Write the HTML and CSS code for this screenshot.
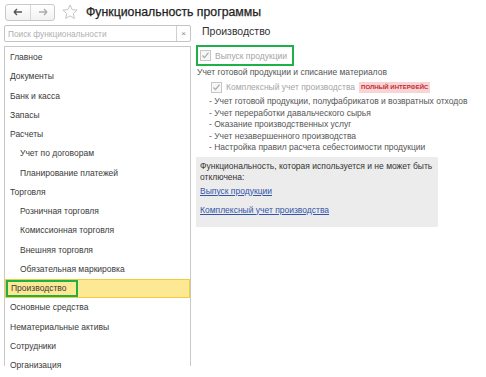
FILE: index.html
```html
<!DOCTYPE html>
<html lang="ru">
<head>
<meta charset="utf-8">
<link rel="stylesheet" href="styles.css">
</head>
<body>
<div class="topbar">
  <div class="navgroup">
    <span class="navbtn"><svg width="10" height="8" viewBox="0 0 10 8"><path d="M1 4h8M1 4l3-3M1 4l3 3" stroke="#555" stroke-width="1.4" fill="none"/></svg></span>
    <span class="navbtn"><svg width="10" height="8" viewBox="0 0 10 8"><path d="M1 4h8M9 4l-3-3M9 4l-3 3" stroke="#aaa" stroke-width="1.4" fill="none"/></svg></span>
  </div>
  <svg class="star" width="16" height="16" viewBox="0 0 16 16"><path d="M8 1l2.1 4.6 5 .5-3.8 3.4 1.1 4.9L8 11.9 3.6 14.4l1.1-4.9L.9 6.1l5-.5z" fill="none" stroke="#c4c4c4" stroke-width="1"/></svg>
  <h1 class="title">Функциональность программы</h1>
</div>
<div class="main">
  <div class="leftcol">
    <div class="search">
      <span class="search-ph">Поиск функциональности</span>
      <span class="search-x">×</span>
    </div>
    <ul class="menu">
      <li>Главное</li>
      <li>Документы</li>
      <li>Банк и касса</li>
      <li>Запасы</li>
      <li>Расчеты</li>
      <li class="sub">Учет по договорам</li>
      <li class="sub">Планирование платежей</li>
      <li>Торговля</li>
      <li class="sub">Розничная торговля</li>
      <li class="sub">Комиссионная торговля</li>
      <li class="sub">Внешняя торговля</li>
      <li class="sub">Обязательная маркировка</li>
      <li class="selected"><span class="hl">Производство</span></li>
      <li>Основные средства</li>
      <li>Нематериальные активы</li>
      <li>Сотрудники</li>
      <li>Организация</li>
    </ul>
  </div>
  <div class="rightcol">
    <h2 class="heading">Производство</h2>
    <div class="opt hlbox">
      <span class="cb"><svg width="9" height="9" viewBox="0 0 9 9"><path d="M1.5 4.5l2 2.2 4-5" stroke="#a8a8a8" stroke-width="1.2" fill="none"/></svg></span>
      <span class="dis">Выпуск продукции</span>
    </div>
    <p class="desc">Учет готовой продукции и списание материалов</p>
    <div class="opt sub2">
      <span class="cb"><svg width="9" height="9" viewBox="0 0 9 9"><path d="M1.5 4.5l2 2.2 4-5" stroke="#a8a8a8" stroke-width="1.2" fill="none"/></svg></span>
      <span class="dis">Комплексный учет производства</span>
      <span class="badge">ПОЛНЫЙ ИНТЕРФЕЙС</span>
    </div>
    <ul class="features">
      <li>- Учет готовой продукции, полуфабрикатов и возвратных отходов</li>
      <li>- Учет переработки давальческого сырья</li>
      <li>- Оказание производственных услуг</li>
      <li>- Учет незавершенного производства</li>
      <li>- Настройка правил расчета себестоимости продукции</li>
    </ul>
    <div class="infobox">
      <p>Функциональность, которая используется и не может быть отключена:</p>
      <a href="#">Выпуск продукции</a>
      <a href="#">Комплексный учет производства</a>
    </div>
  </div>
</div>
</body>
</html>
```
FILE: styles.css
```css
* { box-sizing: border-box; }
html, body { margin: 0; padding: 0; background: #fff; }
body {
  font-family: "Liberation Sans", Arial, sans-serif;
  color: #333;
  width: 486px;
  height: 377px;
  overflow: hidden;
}
.topbar {
  display: flex;
  align-items: center;
  height: 22px;
  padding: 2px 0 0 5px;
}
.navgroup {
  display: flex;
  border: 1px solid #c9c9c9;
  border-radius: 3px;
  height: 17px;
  background: linear-gradient(#fff, #f1f1f1);
}
.navbtn {
  width: 24px;
  display: flex;
  align-items: center;
  justify-content: center;
}
.navbtn + .navbtn { border-left: 1px solid #d6d6d6; }
.star { margin-left: 7px; }
.title {
  margin: 0 0 0 8px;
  font-size: 12.3px;
  font-weight: normal;
  color: #1e1e1e;
  line-height: 16px;
  -webkit-text-stroke: 0.25px #1e1e1e;
}
.main {
  display: grid;
  grid-template-columns: 187px 1fr;
  column-gap: 5px;
  padding-left: 4px;
  margin-top: 3px;
}
.search {
  display: flex;
  align-items: center;
  height: 17px;
  border: 1px solid #c4c4c4;
  border-radius: 2px;
}
.search-ph {
  flex: 1;
  padding-left: 3px;
  font-size: 8.3px;
  color: #b0b0b0;
}
.search-x {
  width: 14px;
  height: 100%;
  border-left: 1px solid #d0d0d0;
  display: flex;
  align-items: center;
  justify-content: center;
  font-size: 8px;
  color: #888;
}
.menu {
  list-style: none;
  margin: 4px 0 0;
  padding: 1px 0 0;
  border: 1px solid #c8c8c8;
  border-bottom: none;
  height: 320px;
}
.menu li {
  height: 19.25px;
  line-height: 19px;
  font-size: 8.5px;
  padding-left: 5px;
  color: #3a3a3a;
}
.menu li.sub { padding-left: 15px; }
.menu li.selected {
  background: #fde894;
  border: 1px solid #f6cb3a;
  padding-left: 0;
  line-height: 17px;
}
.menu .hl {
  display: inline-block;
  width: 72px;
  height: 17px;
  border: 2px solid #1fb04a;
  padding-left: 3px;
  line-height: 13px;
}
.heading {
  margin: 0;
  height: 22px;
  padding: 0 0 0 6px;
  font-size: 10.5px;
  font-weight: normal;
  color: #333;
  line-height: 17px;
  margin-top: -2px;
}
.opt {
  display: flex;
  align-items: center;
  font-size: 8.5px;
}
.hlbox {
  width: 98px;
  height: 21px;
  border: 2px solid #1fb04a;
  padding-left: 2px;
}
.cb {
  width: 11px;
  height: 11px;
  border: 1px solid #c6c6c6;
  background: #f7f7f7;
  display: flex;
  align-items: center;
  justify-content: center;
  margin-right: 4px;
}
.dis { color: #a5a5a5; }
.desc {
  margin: 1px 0 0 1px;
  font-size: 8.5px;
  color: #555;
  line-height: 10px;
}
.sub2 {
  margin: 4px 0 0 15px;
  height: 12px;
}
.badge {
  margin-left: 4px;
  background: #fad4d4;
  color: #c0282d;
  font-size: 6px;
  font-weight: bold;
  padding: 2px 2px;
  line-height: 7px;
}
.features {
  list-style: none;
  margin: 3px 0 0 13px;
  padding: 0;
  font-size: 8.5px;
  line-height: 11.5px;
  color: #555;
}
.infobox {
  margin-top: 3px;
  width: 242px;
  height: 70px;
  background: #ececec;
  padding: 4px 0 4px 4px;
  font-size: 8.5px;
  color: #333;
}
.infobox p { margin: 0; line-height: 11px; }
.infobox a {
  display: block;
  color: #3355aa;
  text-decoration: underline;
  margin-top: 3px;
  line-height: 11px;
}
.infobox a + a { margin-top: 8px; }
```
